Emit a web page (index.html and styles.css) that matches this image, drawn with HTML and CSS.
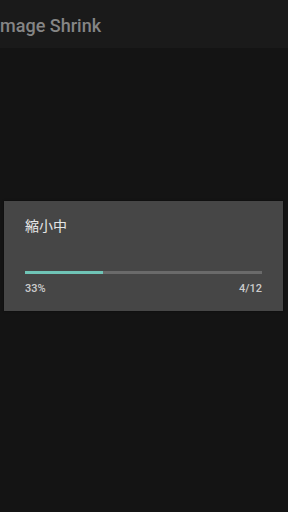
FILE: index.html
```html
<!DOCTYPE html>
<html>
<head>
<meta charset="utf-8">
<link rel="stylesheet" href="styles.css">
</head>
<body>
<header class="appbar"><span class="title">Image Shrink</span></header>
<main class="screen">
  <div class="dialog">
    <div class="dialog-title">縮小中</div>
    <div class="progress"><div class="progress-fill" style="width:33%"></div></div>
    <div class="labels"><span>33%</span><span>4/12</span></div>
  </div>
</main>
</body>
</html>
```
FILE: styles.css
```css
html, body {
  margin: 0;
  padding: 0;
  width: 288px;
  height: 512px;
  background: #141414;
  overflow: hidden;
  font-family: Roboto, "Noto Sans CJK JP", sans-serif;
}
.appbar {
  height: 48px;
  background: #1a1a1a;
  display: flex;
  align-items: center;
  overflow: hidden;
}
.title {
  margin-left: -5px;
  font-size: 18px;
  font-weight: 500;
  color: #858585;
  white-space: nowrap;
  padding-top: 2px;
}
.screen {
  padding: 153px 5px 0 4px;
}
.dialog {
  background: #464646;
  box-shadow: 0 0 2px rgba(0,0,0,0.6);
  padding: 16px 21px 16px 21px;
  height: 78px;
}
.dialog-title {
  font-size: 14px;
  color: #e6e6e6;
  line-height: 16px;
  font-family: "Noto Sans CJK JP", sans-serif;
}
.progress {
  margin-top: 38px;
  height: 3px;
  background: #6a6a6a;
}
.progress-fill {
  height: 100%;
  background: #6fc4b6;
}
.labels {
  display: flex;
  justify-content: space-between;
  margin-top: 8px;
  font-size: 11px;
  font-weight: 500;
  color: #cccccc;
  line-height: 13px;
}
```
